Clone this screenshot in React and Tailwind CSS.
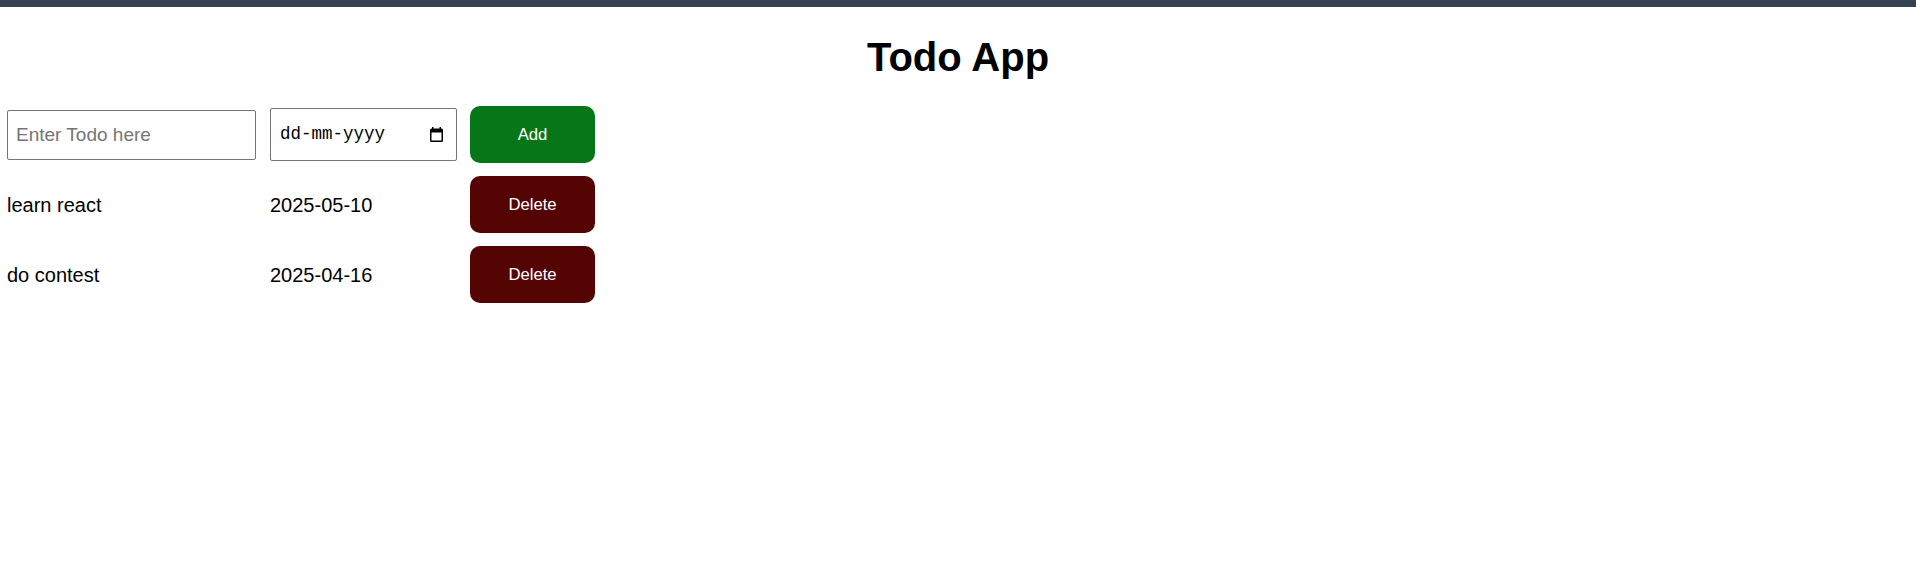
import React from "react";

function CalendarIcon() {
  return (
    <svg width="15" height="16" viewBox="0 0 15 16" aria-hidden="true">
      <rect x="3" y="0" width="1.5" height="2.5" fill="#000" />
      <rect x="10.5" y="0" width="1.5" height="2.5" fill="#000" />
      <path
        d="M2.5 1.5h10a1.5 1.5 0 0 1 1.5 1.5v10.5a1.5 1.5 0 0 1-1.5 1.5h-10A1.5 1.5 0 0 1 1 13.5V3a1.5 1.5 0 0 1 1.5-1.5zM2.5 5.5v8h10v-8z"
        fill="#000"
        fillRule="evenodd"
      />
    </svg>
  );
}

const todos = [
  { name: "learn react", date: "2025-05-10" },
  { name: "do contest", date: "2025-04-16" },
];

export default function App() {
  return (
    <div className="min-h-screen bg-white font-['Liberation_Sans',Arial,sans-serif] text-black">
      <div className="h-[7px] bg-[#364152]" />
      <h1 className="mt-[27px] mb-[26px] text-center text-[40px] font-bold leading-[46px]">
        Todo App
      </h1>
      <div className="flex flex-col gap-[13px] pl-[7px]">
        <div className="flex h-[57px] items-center">
          <input
            type="text"
            placeholder="Enter Todo here"
            className="h-[50px] w-[249px] rounded-[2px] border border-[#767676] px-[8px] text-[19px] placeholder:text-[#757575] outline-none"
          />
          <div className="ml-[14px] flex h-[53px] w-[187px] items-center justify-between rounded-[2px] border border-[#767676] pl-[9px] pr-[12px]">
            <span className="font-['Liberation_Mono',monospace] text-[17.5px] leading-none">
              dd-mm-yyyy
            </span>
            <CalendarIcon />
          </div>
          <button className="ml-[13px] h-[57px] w-[125px] rounded-[10px] bg-[#077618] text-[16.7px] text-white">
            Add
          </button>
        </div>
        {todos.map((t) => (
          <div key={t.name} className="flex h-[57px] items-center text-[20px]">
            <div className="w-[249px]">{t.name}</div>
            <div className="ml-[14px] w-[187px]">{t.date}</div>
            <button className="ml-[13px] h-[57px] w-[125px] rounded-[10px] bg-[#550404] text-[16.7px] text-white">
              Delete
            </button>
          </div>
        ))}
      </div>
    </div>
  );
}
